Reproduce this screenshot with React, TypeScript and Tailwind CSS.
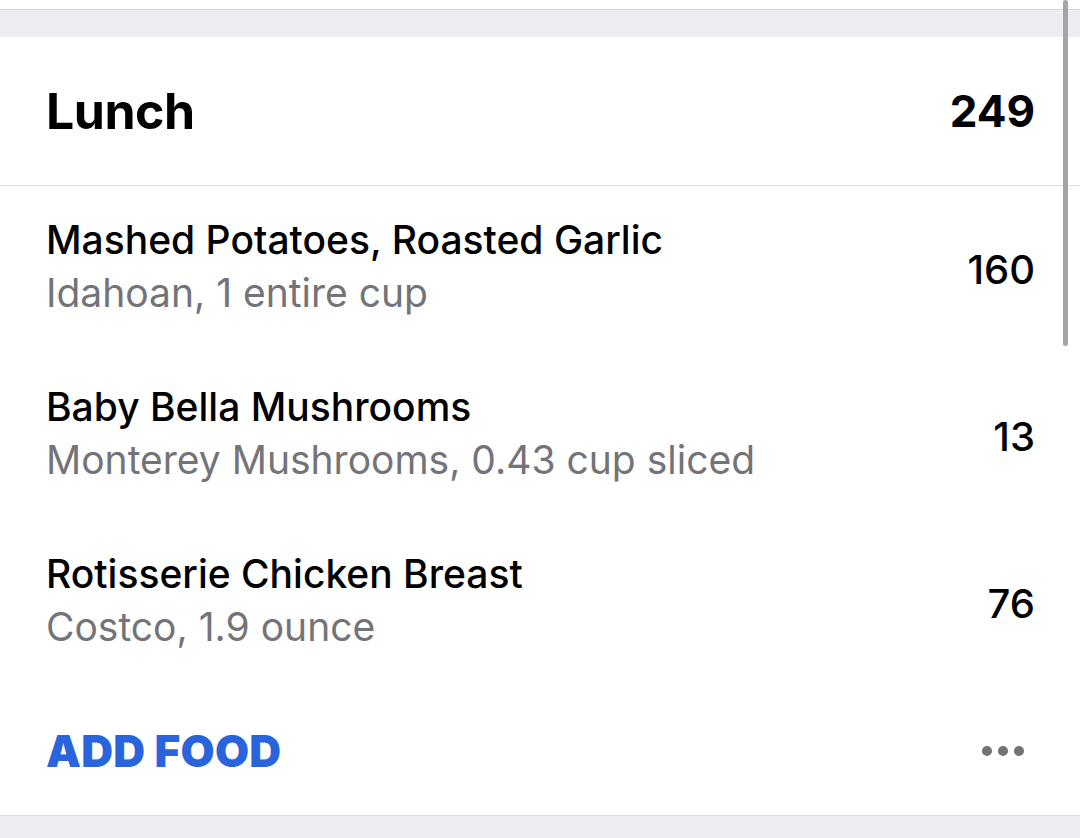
import React from "react";

const items = [
  { name: "Mashed Potatoes, Roasted Garlic", sub: "Idahoan, 1 entire cup", cal: "160" },
  { name: "Baby Bella Mushrooms", sub: "Monterey Mushrooms, 0.43 cup sliced", cal: "13" },
  { name: "Rotisserie Chicken Breast", sub: "Costco, 1.9 ounce", cal: "76" },
];

export default function App() {
  return (
    <div
      className="relative w-[1080px] h-[838px] overflow-hidden bg-[#ececf1]"
      style={{ fontFamily: "Inter, 'Noto Sans', sans-serif" }}
    >
      <div className="h-[10px] bg-white border-b border-[#d6d6db]" />
      <div className="h-[27px]" />
      <div className="bg-white border-b border-[#d6d6db]">
        <div className="h-[149px] flex items-center justify-between pl-[46px] pr-[45px] border-b border-[#dcdce0]">
          <span className="text-[50px] font-bold text-black tracking-[-0.5px]">Lunch</span>
          <span className="text-[44px] font-bold text-black">249</span>
        </div>
        {items.map((it) => (
          <div key={it.name} className="h-[167px] flex items-center justify-between pl-[46px] pr-[45px]">
            <div className="flex flex-col pb-[8px]">
              <span className="text-[39px] leading-[53px] font-medium text-black">{it.name}</span>
              <span className="text-[39px] leading-[53px] text-[#737378]">{it.sub}</span>
            </div>
            <span className="text-[40px] font-medium text-black">{it.cal}</span>
          </div>
        ))}
        <div className="h-[128px] flex items-center justify-between pl-[46px] pr-[56px]">
          <span className="text-[44px] font-black text-[#2a64dc] tracking-[0.3px]">ADD FOOD</span>
          <div className="flex gap-[6px]">
            <span className="w-[10px] h-[10px] rounded-full bg-[#727272]" />
            <span className="w-[10px] h-[10px] rounded-full bg-[#727272]" />
            <span className="w-[10px] h-[10px] rounded-full bg-[#727272]" />
          </div>
        </div>
      </div>
      <div className="absolute right-[12px] top-0 w-[5px] h-[346px] rounded-full bg-[#a4a4a4]" />
    </div>
  );
}
